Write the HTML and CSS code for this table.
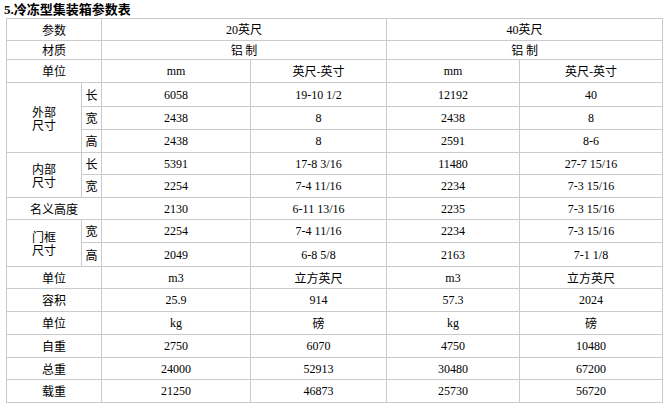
FILE: index.html
```html
<!DOCTYPE html>
<html lang="zh">
<head>
<meta charset="utf-8">
<title>冷冻型集装箱参数表</title>
<link rel="stylesheet" href="styles.css">
</head>
<body>
<div class="page">
<h1 class="title"><span class="num">5.</span>冷冻型集装箱参数表</h1>
<table class="spec">
<colgroup>
<col class="c1"><col class="c2"><col class="c3"><col class="c4"><col class="c5"><col class="c6">
</colgroup>
<tr class="h23"><td colspan="2" class="cjk">参数</td><td colspan="2"><span class="num">20</span><span class="cjk">英尺</span></td><td colspan="2"><span class="num">40</span><span class="cjk">英尺</span></td></tr>
<tr class="h19"><td colspan="2" class="cjk">材质</td><td colspan="2" class="cjk">铝 制</td><td colspan="2" class="cjk">铝 制</td></tr>
<tr class="h23"><td colspan="2" class="cjk">单位</td><td class="num">mm</td><td class="cjk">英尺-英寸</td><td class="num">mm</td><td class="cjk">英尺-英寸</td></tr>
<tr class="h24"><td rowspan="3" class="cjk group"><span class="ln">外部</span><span class="ln">尺寸</span></td><td class="cjk">长</td><td class="num">6058</td><td class="num">19-10 1/2</td><td class="num">12192</td><td class="num">40</td></tr>
<tr class="h23"><td class="cjk">宽</td><td class="num">2438</td><td class="num">8</td><td class="num">2438</td><td class="num">8</td></tr>
<tr class="h23"><td class="cjk">高</td><td class="num">2438</td><td class="num">8</td><td class="num">2591</td><td class="num">8-6</td></tr>
<tr class="h22"><td rowspan="2" class="cjk group"><span class="ln">内部</span><span class="ln">尺寸</span></td><td class="cjk">长</td><td class="num">5391</td><td class="num">17-8 3/16</td><td class="num">11480</td><td class="num">27-7 15/16</td></tr>
<tr class="h23"><td class="cjk">宽</td><td class="num">2254</td><td class="num">7-4 11/16</td><td class="num">2234</td><td class="num">7-3 15/16</td></tr>
<tr class="h22"><td colspan="2" class="cjk">名义高度</td><td class="num">2130</td><td class="num">6-11 13/16</td><td class="num">2235</td><td class="num">7-3 15/16</td></tr>
<tr class="h23"><td rowspan="2" class="cjk group"><span class="ln">门框</span><span class="ln">尺寸</span></td><td class="cjk">宽</td><td class="num">2254</td><td class="num">7-4 11/16</td><td class="num">2234</td><td class="num">7-3 15/16</td></tr>
<tr class="h24"><td class="cjk">高</td><td class="num">2049</td><td class="num">6-8 5/8</td><td class="num">2163</td><td class="num">7-1 1/8</td></tr>
<tr class="h22"><td colspan="2" class="cjk">单位</td><td class="num">m3</td><td class="cjk">立方英尺</td><td class="num">m3</td><td class="cjk">立方英尺</td></tr>
<tr class="h23"><td colspan="2" class="cjk">容积</td><td class="num">25.9</td><td class="num">914</td><td class="num">57.3</td><td class="num">2024</td></tr>
<tr class="h23"><td colspan="2" class="cjk">单位</td><td class="num">kg</td><td class="cjk">磅</td><td class="num">kg</td><td class="cjk">磅</td></tr>
<tr class="h23"><td colspan="2" class="cjk">自重</td><td class="num">2750</td><td class="num">6070</td><td class="num">4750</td><td class="num">10480</td></tr>
<tr class="h22"><td colspan="2" class="cjk">总重</td><td class="num">24000</td><td class="num">52913</td><td class="num">30480</td><td class="num">67200</td></tr>
<tr class="h23"><td colspan="2" class="cjk">载重</td><td class="num">21250</td><td class="num">46873</td><td class="num">25730</td><td class="num">56720</td></tr>
</table>
</div>
</body>
</html>
```
FILE: styles.css
```css
html, body {
  margin: 0;
  padding: 0;
  background: #ffffff;
  color: #000000;
}
.page {
  padding: 0 6px;
}
.title {
  margin: 0 0 1px -2px;
  padding-top: 1px;
  font-family: "Noto Sans CJK SC", sans-serif;
  font-size: 13px;
  font-weight: bold;
  line-height: 15px;
}
.title .num {
  font-family: "Liberation Serif", serif;
  font-weight: bold;
}
.spec {
  border-collapse: separate;
  border-spacing: 0;
  table-layout: fixed;
  width: 656px;
  border-top: 1px solid #cbcbcb;
  border-left: 1px solid #cbcbcb;
}
.c1 { width: 75px; }
.c2 { width: 20px; }
.c3 { width: 149px; }
.c4 { width: 136px; }
.c5 { width: 133px; }
.c6 { width: 143px; }
.spec td {
  border-right: 1px solid #cbcbcb;
  border-bottom: 1px solid #cbcbcb;
  padding: 0;
  text-align: center;
  vertical-align: middle;
  font-size: 12px;
  line-height: 14px;
  box-sizing: border-box;
}
.cjk {
  font-family: "Noto Sans CJK SC", sans-serif;
}
.num {
  font-family: "Liberation Serif", serif;
}
.spec td.group .ln {
  display: block;
  height: 13px;
  line-height: 13px;
}
.h19 td { height: 19px; }
.h22 td { height: 22px; }
.h23 td { height: 23px; }
.h24 td { height: 24px; }
.spec tr:first-child td { height: 22px; }
```
